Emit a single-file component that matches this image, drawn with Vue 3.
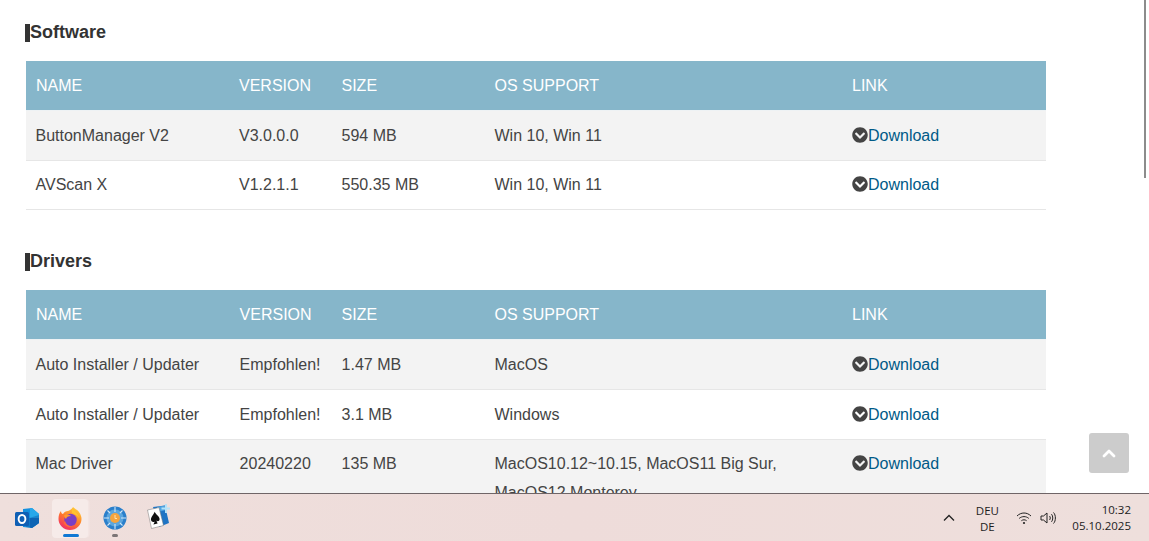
<script setup>
const header = ['NAME', 'VERSION', 'SIZE', 'OS SUPPORT', 'LINK']
const sections = [
  {
    title: 'Software',
    cls: 'first',
    rows: [
      ['ButtonManager V2', 'V3.0.0.0', '594 MB', 'Win 10, Win 11'],
      ['AVScan X', 'V1.2.1.1', '550.35 MB', 'Win 10, Win 11'],
    ],
  },
  {
    title: 'Drivers',
    cls: 'second',
    rows: [
      ['Auto Installer / Updater', 'Empfohlen!', '1.47 MB', 'MacOS'],
      ['Auto Installer / Updater', 'Empfohlen!', '3.1 MB', 'Windows'],
      ['Mac Driver', '20240220', '135 MB', 'MacOS10.12~10.15, MacOS11 Big Sur, MacOS12 Monterey'],
    ],
  },
]
</script>

<template>
  <div class="screen">
    <main class="page">
      <section v-for="s in sections" :key="s.title" class="section">
        <h2 class="title">{{ s.title }}</h2>
        <table class="table" :class="s.cls">
          <colgroup>
            <col class="c1" /><col class="c2" /><col class="c3" /><col class="c4" /><col class="c5" />
          </colgroup>
          <thead>
            <tr><th v-for="h in header" :key="h">{{ h }}</th></tr>
          </thead>
          <tbody>
            <tr v-for="(r, i) in s.rows" :key="i">
              <td v-for="(c, j) in r" :key="j">{{ c }}</td>
              <td>
                <svg class="chev" viewBox="0 0 512 512" width="16" height="16">
                  <path d="M504 256c0 137-111 248-248 248S8 393 8 256 119 8 256 8s248 111 248 248zM273 369.9l135.5-135.5c9.4-9.4 9.4-24.6 0-33.9l-17-17c-9.4-9.4-24.6-9.4-33.9 0L256 285.1 154.4 183.5c-9.4-9.4-24.6-9.4-33.9 0l-17 17c-9.4 9.4-9.4 24.6 0 33.9L239 369.9c9.4 9.4 24.6 9.4 34 0z" fill="#444" />
                </svg><a class="link">Download</a>
              </td>
            </tr>
          </tbody>
        </table>
      </section>
    </main>

    <div class="scrollbar"></div>
    <button class="totop" aria-label="Top">
      <svg viewBox="0 0 14 10" width="14" height="10">
        <path d="M2 8 L7 3 L12 8" fill="none" stroke="#fff" stroke-width="2.8" stroke-linecap="round" stroke-linejoin="round" />
      </svg>
    </button>

    <footer class="taskbar">
      <div class="apps">
        <div class="app outlook">
          <svg viewBox="0 0 26 26" width="26" height="26">
            <path d="M9 4 L18 3 L25 9 L25 18 L18 23 L9 22 Z" fill="#1490df" />
            <path d="M16 3.5 L18 3 L25 9 L25 13 L16 13 Z" fill="#28a8ea" />
            <path d="M16 13 H25 V18 L18 23 L16 22.6 Z" fill="#0f6cbd" />
            <path d="M12 14 L25 10 V18 L18 23 L12 22 Z" fill="#0a5aa8" opacity=".45" />
            <rect x="1" y="7" width="14" height="14" rx="1.5" fill="#0f5fb4" />
            <ellipse cx="8" cy="14" rx="3.4" ry="4" fill="none" stroke="#fff" stroke-width="1.9" />
          </svg>
        </div>
        <div class="app firefox">
          <div class="tile"></div>
          <svg class="ico" viewBox="0 0 24 24" width="24" height="24">
            <defs>
              <linearGradient id="ffa" x1="0.8" y1="0" x2="0.2" y2="1">
                <stop offset="0" stop-color="#ffd43a" />
                <stop offset=".5" stop-color="#ff7a2a" />
                <stop offset="1" stop-color="#f0266e" />
              </linearGradient>
            </defs>
            <path d="M15 1 C18 4 20 4 21 6 C23 9 23.5 11 23.5 13 A11.5 11 0 0 1 0.5 13 C0.5 10 1 7 3 5 C3 7 4 8 5 8 C6 6 8 5 10 5 C12 4 14 3 15 1 Z" fill="url(#ffa)" />
            <path d="M14 2 C16 5 20 7 21 12 C19 9 16 8 14 7 Z" fill="#ffc42e" />
            <circle cx="12.5" cy="14" r="6.2" fill="#7b3fc4" />
            <path d="M6 9.5 C8 8 11 8.5 13 10 C10 10 8.5 11 8 13 C7 12 6.5 11 6 9.5 Z" fill="#ff9a2e" />
            <path d="M7 15 C8 19 12 21 16 19.5 C14 21.5 8 22 5.5 17 Z" fill="#ff6a3a" />
          </svg>
          <div class="active"></div>
        </div>
        <div class="app globe">
          <svg viewBox="0 0 24 24" width="24" height="24">
            <circle cx="12" cy="12" r="11.5" fill="#2a7fcb" />
            <circle cx="12" cy="12" r="8.5" fill="#5ba6de" />
            <circle cx="12" cy="12" r="5" fill="#f4a43e" />
            <path d="M12 1 V6 M12 18 V23 M1 12 H6 M18 12 H23 M4.5 4.5 L7 7 M17 17 L19.5 19.5 M4.5 19.5 L7 17 M17 7 L19.5 4.5" stroke="#cfe6f7" stroke-width="1.1" />
            <path d="M12 9 V12.5 H14" fill="none" stroke="#ffe1a8" stroke-width="1" />
          </svg>
          <div class="running"></div>
        </div>
        <div class="app cards">
          <svg viewBox="0 0 24 26" width="24" height="26">
            <path d="M7 3 L19 1.5 L23 19 L13 23 Z" fill="#1f74c4" />
            <path d="M11 3 L19 1.5 L20 6 L12 8 Z" fill="#4fa3e0" />
            <path d="M1.5 6 L13 3.6 L17.5 21.5 L5.5 24.5 Z" fill="#fff" stroke="#777" stroke-width=".5" />
            <path d="M8.6 7.8 C10 11 13.6 12.2 13.6 15.2 C13.6 17.2 11.6 17.7 10.4 16.6 L11.6 19.6 L7.4 20.6 L8.8 17.4 C7.6 18.4 5.4 18 5 16 C4.6 13 7.6 11.2 8.6 7.8 Z" fill="#111" />
            <path d="M20 0 V9 M15.5 4.5 H24" stroke="#b5e2f8" stroke-width="2" />
          </svg>
        </div>
      </div>

      <div class="tray">
        <svg class="caret" viewBox="0 0 12 8" width="12" height="8">
          <path d="M1 6.5 L6 1.5 L11 6.5" fill="none" stroke="#222" stroke-width="1.3" />
        </svg>
        <div class="lang"><span>DEU</span><span>DE</span></div>
        <svg class="wifi" viewBox="0 0 16 14" width="16" height="14">
          <path d="M1 5 C5 1 11 1 15 5 M3.2 7.4 C6 5 10 5 12.8 7.4 M5.4 9.7 C7 8.5 9 8.5 10.6 9.7" fill="none" stroke="#222" stroke-width="1" />
          <circle cx="8" cy="12" r="1.1" fill="#222" />
        </svg>
        <svg class="sound" viewBox="0 0 17 14" width="17" height="14">
          <path d="M1 5 H3.5 L7 2 V12 L3.5 9 H1 Z" fill="none" stroke="#222" stroke-width="1" />
          <path d="M9.5 5 C10.5 6 10.5 8 9.5 9 M11.5 3.2 C13.2 5 13.2 9 11.5 10.8 M13.5 1.5 C16 4 16 10 13.5 12.5" fill="none" stroke="#222" stroke-width="1" />
        </svg>
        <div class="clock"><span>10:32</span><span>05.10.2025</span></div>
      </div>
    </footer>
  </div>
</template>

<style scoped>
.screen {
  position: relative;
  display: flex;
  flex-direction: column;
  width: 1149px;
  height: 541px;
  overflow: hidden;
  background: #fff;
  font-family: "Liberation Sans", Arial, sans-serif;
}
.page {
  flex: 1;
  min-height: 0;
  overflow: hidden;
  padding: 20px 0 0 26px;
}
.section {
  width: 1020px;
  margin-bottom: 39.2px;
}
.title {
  margin: 0 0 17px;
  font-size: 18px;
  line-height: 24px;
  font-weight: 700;
  color: #333;
}
.title::before {
  content: "";
  display: inline-block;
  width: 5px;
  height: 18px;
  margin-left: -1px;
  background: #333;
  vertical-align: -4px;
}
.table {
  width: 1020px;
  table-layout: fixed;
  border-collapse: separate;
  border-spacing: 0;
  font-size: 16px;
  line-height: 28.8px;
  color: #444;
}
.c1 { width: 203px; }
.c2 { width: 102.5px; }
.c3 { width: 153px; }
.c4 { width: 357.5px; }
.c5 { width: 204px; }
.second .c1 { width: 203.6px; }
.second .c2 { width: 102px; }
.second .c3 { width: 152.9px; }
.second .c4 { width: 357.5px; }
th {
  height: 50px;
  padding: 2px 10px 0;
  box-sizing: border-box;
  background: #86b6ca;
  background-clip: padding-box;
  border-bottom: 1px solid #eef2f4;
  color: #fff;
  font-weight: 400;
  text-align: left;
}
td {
  padding: 10.6px 10px 9.2px;
  border-bottom: 1px solid #e6e6e6;
  vertical-align: top;
}
tbody tr:nth-child(odd) td { background: #f3f3f3; }
tbody td:first-child { padding-left: 9.5px; }
.chev {
  vertical-align: -2px;
}
.link {
  color: #005a87;
}
.scrollbar {
  position: absolute;
  top: 0;
  left: 1144px;
  width: 2px;
  height: 178px;
  background: #8c8c8c;
}
.totop {
  position: absolute;
  left: 1089px;
  top: 433px;
  display: flex;
  align-items: center;
  justify-content: center;
  width: 40px;
  height: 40px;
  padding: 0;
  border: 0;
  border-radius: 3px;
  background: #ccc;
}
.taskbar {
  flex: none;
  display: flex;
  justify-content: space-between;
  height: 48px;
  box-sizing: border-box;
  border-top: 1px solid #6f6567;
  background: linear-gradient(90deg, #efdfdc, #eedcda 50%, #eedfdc);
  font-family: "Open Sans", "Noto Sans", sans-serif;
  color: #1c1c1c;
}
.apps {
  display: flex;
  align-items: center;
  padding-left: 14px;
}
.app {
  position: relative;
  display: flex;
  align-items: center;
  justify-content: center;
  height: 47px;
}
.outlook { width: 26px; margin-right: 12px; }
.firefox { width: 38px; margin-right: 6px; }
.globe { width: 38px; margin-right: 12px; }
.cards { width: 24px; margin-top: -2px; }
.tile {
  position: absolute;
  left: 0;
  top: 5px;
  width: 36px;
  height: 39px;
  border-radius: 4px;
  background: #f6ebe9;
  box-shadow: 2px 0 0 -0.5px #f3e5e3;
}
.ico {
  position: relative;
  margin-right: 3px;
}
.active {
  position: absolute;
  left: 11px;
  top: 40px;
  width: 16px;
  height: 3px;
  border-radius: 2px;
  background: #0f78d4;
}
.running {
  position: absolute;
  left: 16px;
  top: 40px;
  width: 6px;
  height: 3px;
  border-radius: 2px;
  background: #7b7576;
}
.tray {
  display: flex;
  align-items: center;
  padding-right: 18px;
  font-size: 11.5px;
  line-height: 16px;
}
.caret { margin-right: 15px; }
.lang {
  display: flex;
  flex-direction: column;
  align-items: center;
  width: 34px;
  margin-right: 12px;
  padding-top: 2px;
}
.wifi { margin-right: 8px; }
.sound { margin-right: 15px; }
.clock {
  display: flex;
  flex-direction: column;
  align-items: flex-end;
}
</style>
